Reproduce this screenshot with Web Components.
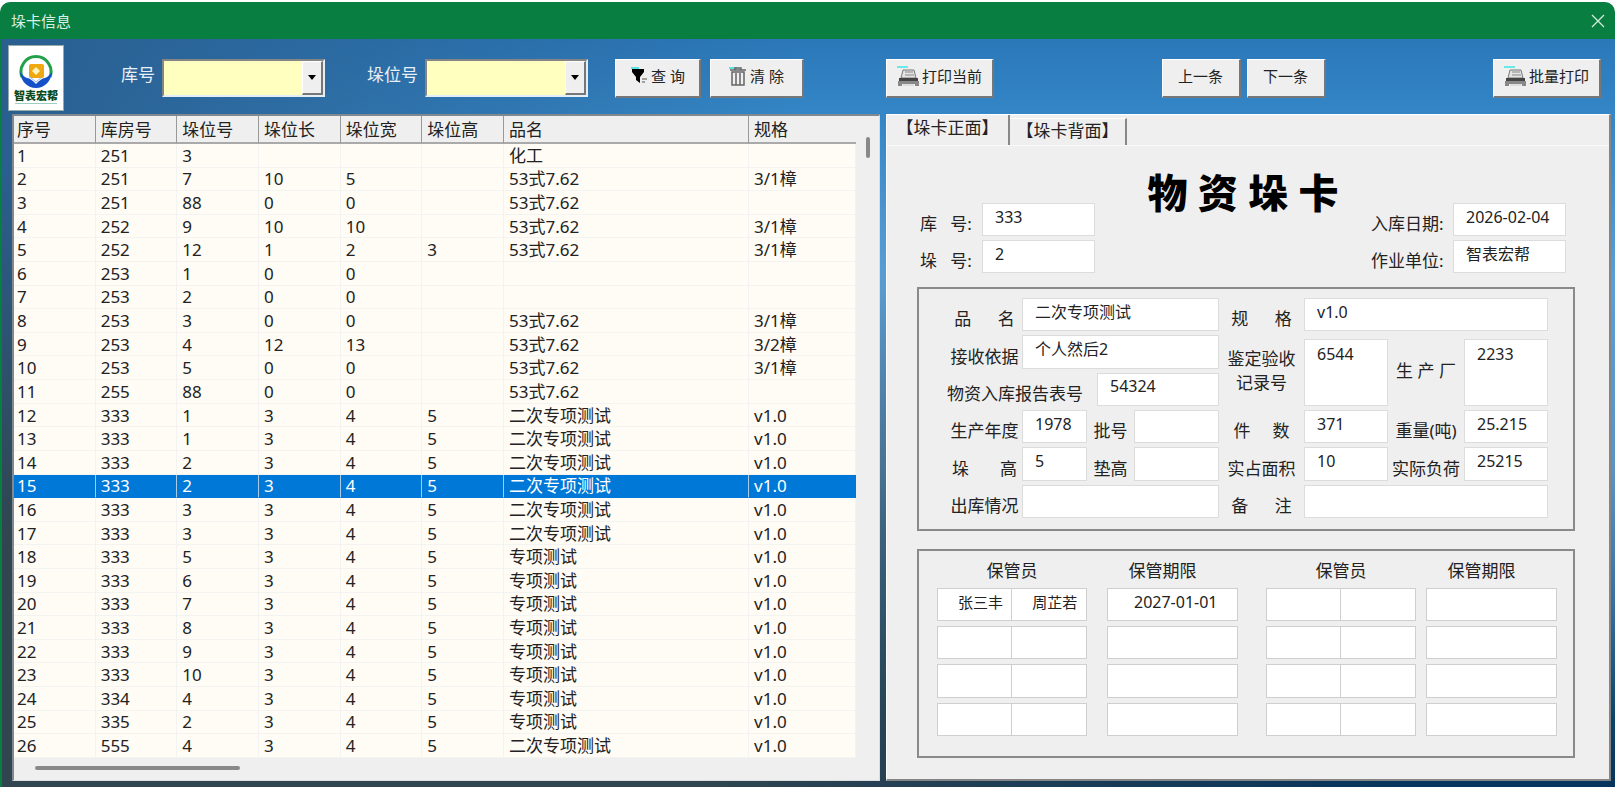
<!DOCTYPE html>
<html lang="zh-CN">
<head>
<meta charset="utf-8">
<title>垛卡信息</title>
<style>
  html, body {
    height: 100%;
    margin: 0;
  }
  body {
    background: #fff;
    color: #222;
    font-family: "Noto Sans", "Noto Sans CJK SC", sans-serif;
    font-size: 17px;
    line-height: 22px;
  }
</style>
</head>
<body>
<stack-window data-title="垛卡信息"></stack-window>

<script>
const makeTemplate = (html) => {
  const template = document.createElement("template");
  template.innerHTML = html;
  return template;
};

const icons = {
  none: "",
  filter: `<svg width="18" height="20" viewBox="0 0 18 20"><path d="M1 2h8" stroke="#5fe3e0" stroke-width="2"/><path d="M2 3h12v3l-4 5v6l-4-3v-3L2 6z" fill="#000"/><path d="M12 13h5M12 16h3" stroke="#555" stroke-width="1"/></svg>`,
  trash: `<svg width="18" height="20" viewBox="0 0 18 20"><path d="M0 2h8" stroke="#5fe3e0" stroke-width="2"/><path d="M1 4h16M6 4V2h6v2M3 6v13h12V6zM7 7v12M11 7v12" fill="none" stroke="#666" stroke-width="1.5"/></svg>`,
  printer: `<svg width="22" height="22" viewBox="0 0 22 22"><path d="M0 2h11" stroke="#6be8e8" stroke-width="2"/><path d="M6 5h11l2 8H4z" fill="#e4e4e4" stroke="#777"/><path d="M8 7h8M8 10h9" stroke="#888"/><path d="M2 13h19v3H2z" fill="#444"/><path d="M1 16h21v5h-4v-2H5v2H1z" fill="#888"/><path d="M6 19h11v2H6z" fill="#ddd"/></svg>`
};

/* raised toolbar button */
class ToolButton extends HTMLElement {
  constructor() {
    super();
    this.attachShadow({ mode: "open" });
    this.shadowRoot.innerHTML = `
<style>
  :host { display: block; }
  button {
    display: flex;
    align-items: center;
    justify-content: center;
    gap: 3px;
    box-sizing: border-box;
    width: 100%;
    height: 39px;
    padding: 0 0 3px;
    border: solid;
    border-width: 1px 2px 2px 1px;
    border-color: #fff #777 #777 #fff;
    background: #efefef;
    color: #222;
    font: inherit;
    font-size: 15px;
    white-space: pre;
  }
</style>
<button type="button">${icons[this.dataset.icon || "none"]}<span><slot></slot></span></button>`;
  }
}
customElements.define("tool-button", ToolButton);

/* label with a sunken drop-down */
class ComboBox extends HTMLElement {
  constructor() {
    super();
    this.attachShadow({ mode: "open" });
    this.shadowRoot.innerHTML = `
<style>
  :host { display: flex; align-items: center; gap: 7px; color: #e8f0f8; }
  label { padding-bottom: 6px; }
  .box {
    display: grid;
    grid-template-columns: 1fr 21px;
    box-sizing: border-box;
    width: 163px;
    height: 38px;
    border: 2px solid;
    border-color: #858585 #e4eef6 #e4eef6 #858585;
  }
  select {
    grid-area: 1 / 1 / 2 / 3;
    appearance: none;
    border: 0;
    border-radius: 0;
    padding: 0 24px 0 6px;
    background: #ffffc0;
    font: inherit;
  }
  .arrow {
    grid-area: 1 / 2;
    display: grid;
    place-items: center;
    border: solid;
    border-width: 1px 2px 2px 1px;
    border-color: #fff #777 #777 #fff;
    background: #efefef;
    pointer-events: none;
  }
</style>
<label for="pick"><slot></slot></label>
<div class="box">
  <select id="pick"><option></option></select>
  <span class="arrow"><svg width="8" height="5"><path d="M0 0h8L4 5z"/></svg></span>
</div>`;
  }
}
customElements.define("combo-box", ComboBox);

class CompanyLogo extends HTMLElement {
  constructor() {
    super();
    this.attachShadow({ mode: "open" });
    this.shadowRoot.innerHTML = `
<style>
  :host {
    display: flex;
    flex-direction: column;
    align-items: center;
    box-sizing: border-box;
    width: 56px;
    height: 66px;
    padding-top: 8px;
    border: 1px solid #9aa;
    background: #fff;
    color: #0b4a1c;
  }
  svg { flex: none; }
  b { font-size: 11px; line-height: 14px; font-weight: 900; }
  i { width: 42px; height: 1px; background: #9ccfc0; }
</style>
<svg width="34" height="35" viewBox="0 0 34 35">
  <path d="M3 23A15 15 0 1 1 31 23" fill="none" stroke="#22a04a" stroke-width="3"/>
  <path d="M1 18c2 2 4 5 7 6 3 0 6 3 9 6 3-3 6-6 9-6 3-1 5-4 7-6-1 10-8 16-16 16S2 28 1 18z" fill="#1450c8"/>
  <rect x="10" y="10" width="15" height="14" rx="2" fill="#f0a810"/>
  <path d="M17 13l4 4-4 4-4-4z" fill="#fff3c0"/>
  <path d="M11 23l6 5 6-5" fill="none" stroke="#8cb8f0" stroke-width="1"/>
</svg>
<b>智表宏帮</b><i></i>`;
  }
}
customElements.define("company-logo", CompanyLogo);

/* records shown in the list: 库房号, 垛位号, 长, 宽, 高, 品名, 规格 */
const T = "二次专项测试";
const Z = "专项测试";
const S = "53式7.62";
const records = [
  [251, 3, "", "", "", "化工", ""],
  [251, 7, 10, 5, "", S, "3/1樟"],
  [251, 88, 0, 0, "", S, ""],
  [252, 9, 10, 10, "", S, "3/1樟"],
  [252, 12, 1, 2, 3, S, "3/1樟"],
  [253, 1, 0, 0, "", "", ""],
  [253, 2, 0, 0, "", "", ""],
  [253, 3, 0, 0, "", S, "3/1樟"],
  [253, 4, 12, 13, "", S, "3/2樟"],
  [253, 5, 0, 0, "", S, "3/1樟"],
  [255, 88, 0, 0, "", S, ""],
  [333, 1, 3, 4, 5, T, "v1.0"],
  [333, 1, 3, 4, 5, T, "v1.0"],
  [333, 2, 3, 4, 5, T, "v1.0"],
  [333, 2, 3, 4, 5, T, "v1.0"],
  [333, 3, 3, 4, 5, T, "v1.0"],
  [333, 3, 3, 4, 5, T, "v1.0"],
  [333, 5, 3, 4, 5, Z, "v1.0"],
  [333, 6, 3, 4, 5, Z, "v1.0"],
  [333, 7, 3, 4, 5, Z, "v1.0"],
  [333, 8, 3, 4, 5, Z, "v1.0"],
  [333, 9, 3, 4, 5, Z, "v1.0"],
  [333, 10, 3, 4, 5, Z, "v1.0"],
  [334, 4, 3, 4, 5, Z, "v1.0"],
  [335, 2, 3, 4, 5, Z, "v1.0"],
  [555, 4, 3, 4, 5, T, "v1.0"]
];
const heads = ["序号", "库房号", "垛位号", "垛位长", "垛位宽", "垛位高", "品名", "规格"];

const listTemplate = makeTemplate(`
<style>
  :host {
    display: grid;
    grid-template: 1fr 22px / 1fr 23px;
    box-sizing: border-box;
    border: solid;
    border-width: 2px 1px 1px 2px;
    border-color: #808890 #ddd #ddd #808890;
    background: #efefef;
  }
  table {
    width: 100%;
    height: 100%;
    table-layout: fixed;
    border-collapse: separate;
    border-spacing: 0;
  }
  col { width: 9.7%; }
  col.name { width: 29.1%; }
  col.spec { width: auto; }
  th {
    height: 28px;
    box-sizing: border-box;
    padding: 2px 0 0 5px;
    border-right: 1px solid #999;
    border-bottom: 2px solid #aaa;
    background: #efefef;
    font-weight: normal;
    text-align: left;
  }
  th:last-child { border-right: 0; }
  td {
    padding: 1px 0 0 5px;
    border-right: 1px solid #f3f3f1;
    border-bottom: 1px solid #f3f3f1;
    background: #fffbf5;
    line-height: 20px;
    white-space: nowrap;
  }
  td:first-child, th:first-child { padding-left: 3px; }
  tr[aria-selected] td {
    background: #0078d7;
    border-bottom-color: #0078d7;
    border-right-color: #a8cdea;
    color: #fff;
  }
  tr[aria-selected] td:last-child { border-right-color: #0078d7; }
  .vbar { display: flex; justify-content: center; padding-top: 21px; }
  .vbar i { width: 4px; height: 21px; border-radius: 2px; background: #888; }
  .hbar { display: flex; align-items: center; padding: 0 21px 2px; }
  .hbar i { width: 205px; height: 4px; border-radius: 2px; background: #888; }
</style>
<table>
  <colgroup><col><col><col><col><col><col><col class="name"><col class="spec"></colgroup>
  <thead><tr></tr></thead>
  <tbody></tbody>
</table>
<div class="vbar"><i></i></div>
<div class="hbar"><i></i></div>
`);

class StackList extends HTMLElement {
  constructor() {
    super();
    this.attachShadow({ mode: "open" });
    this.shadowRoot.appendChild(listTemplate.content.cloneNode(true));
  }
  connectedCallback() {
    this.render();
  }
  render() {
    const selected = +this.dataset.selected;
    this.shadowRoot.querySelector("thead tr").innerHTML =
      heads.map((h) => `<th>${h}</th>`).join("");
    this.shadowRoot.querySelector("tbody").innerHTML = records
      .map((row, i) => {
        const cells = [i + 1, ...row].map((c) => `<td>${c}</td>`).join("");
        return `<tr${i + 1 === selected ? ' aria-selected="true"' : ""}>${cells}</tr>`;
      })
      .join("");
  }
}
customElements.define("stack-list", StackList);

/* one labelled value on the card; data-tall gives a two-row box */
class CardField extends HTMLElement {
  constructor() {
    super();
    this.attachShadow({ mode: "open" });
    const tall = this.hasAttribute("data-tall");
    const value = this.dataset.value || "";
    this.shadowRoot.innerHTML = `
<style>
  :host { display: flex; min-width: 0; align-items: flex-end; }
  :host([data-tall]) { align-items: center; }
  label {
    flex: none;
    width: var(--label, 75px);
    text-align: var(--label-align, center);
    line-height: 24px;
    white-space: pre;
  }
  input, textarea {
    flex: 1;
    align-self: stretch;
    box-sizing: border-box;
    width: 0;
    min-width: 0;
    min-height: 33px;
    margin: 0;
    border: 1px solid #dcdcdc;
    border-radius: 0;
    padding: 0 4px 6px 12px;
    background: #fff;
    color: #222;
    font: inherit;
    font-size: 16px;
    resize: none;
  }
  textarea { margin-top: 4px; padding-top: 3px; overflow: hidden; }
</style>
<label for="value"><slot></slot></label>
${tall ? `<textarea id="value">${value}</textarea>` : `<input id="value" value="${value}">`}`;
  }
}
customElements.define("card-field", CardField);

/* keeper grid in the lower half of the card */
class KeeperGrid extends HTMLElement {
  constructor() {
    super();
    this.attachShadow({ mode: "open" });
    const first = ["张三丰", "周芷若", "2027-01-01"];
    const half = (vals, n) => `
      <div class="pair">
        <input aria-label="保管员" value="${vals[0] || ""}"><input aria-label="保管员" value="${vals[1] || ""}">
      </div>
      <span></span>
      <input class="date" aria-label="保管期限" value="${vals[2] || ""}">${n ? "" : "<span></span>"}`;
    const rows = [0, 1, 2, 3]
      .map((r) => half(r ? [] : first, 0) + half([], 1))
      .join("");
    this.shadowRoot.innerHTML = `
<style>
  :host {
    display: grid;
    grid-template-columns: 150fr 20px 131fr 28px 150fr 10px 131fr;
    grid-template-rows: 32px repeat(4, 1fr);
    row-gap: 5px;
    box-sizing: border-box;
    padding: 0 16px 20px 18px;
    border: 2px solid #8a8a8a;
  }
  b { align-self: end; font-weight: normal; text-align: center; line-height: 24px; }
  b.term { padding-right: 20px; }
  .pair { display: flex; }
  input {
    box-sizing: border-box;
    width: 100%;
    min-width: 0;
    min-height: 0;
    margin: 0;
    border: 1px solid #cfcfcf;
    border-radius: 0;
    padding: 0 0 6px 20px;
    background: #fff;
    color: #222;
    font: inherit;
    font-size: 15px;
  }
  .pair input + input { border-left: 0; }
  .date { padding-left: 26px; font-size: 16px; }
</style>
<b>保管员</b><span></span><b class="term">保管期限</b><span></span><b>保管员</b><span></span><b class="term">保管期限</b>
${rows}`;
  }
}
customElements.define("keeper-grid", KeeperGrid);

const cardTemplate = makeTemplate(`
<style>
  :host {
    display: flex;
    flex-direction: column;
    box-sizing: border-box;
    border: solid;
    border-width: 1px 2px 2px 1px;
    border-color: #fff #858585 #858585 #fff;
    background: #efefef;
  }
  .tabs { display: flex; height: 30px; border-bottom: 1px solid #fafafa; }
  .tabs button {
    border: 0;
    border-right: 2px solid #888;
    background: none;
    color: #222;
    font: inherit;
    white-space: nowrap;
  }
  .tabs .on { width: 123px; padding: 0 6px 4px; }
  .tabs .off { width: 117px; margin-top: 3px; padding: 0 4px 2px; border-top: 1px solid #fff; }
  .body {
    flex: 1;
    display: flex;
    flex-direction: column;
    padding: 21px 34px 21px 30px;
  }
  header {
    display: grid;
    grid-template-columns: 1fr auto 1fr;
    padding: 0 9px 14px 3px;
  }
  h1 { margin: 0; color: #000; font-size: 40px; font-weight: 800; line-height: 52px; white-space: nowrap; }
  .col { display: flex; flex-direction: column; gap: 4px; width: 175px; padding-top: 36px; --label: 62px; --label-align: start; }
  .col.right { width: 195px; justify-self: end; --label: 82px; }
  .goods {
    flex: 246;
    display: grid;
    grid-template-columns: 140fr 132fr 169fr 160fr;
    grid-template-rows: repeat(6, 1fr);
    row-gap: 4px;
    box-sizing: border-box;
    padding: 9px 25px 11px 28px;
    border: 2px solid #8a8a8a;
  }
  .two { grid-column: span 2; }
  .c { --label: 85px; }
  .d { --label: 76px; }
  .b { --label: 47px; }
  .long { --label: 150px; --label-align: start; }
  [data-tall] { grid-row: span 2; }
  keeper-grid { flex: 207; margin-top: 18px; }
</style>
<div class="tabs">
  <button class="on" type="button">【垛卡正面】</button>
  <button class="off" type="button">【垛卡背面】</button>
</div>
<div class="body">
  <header>
    <div class="col">
      <card-field data-value="333">库   号:</card-field>
      <card-field data-value="2">垛   号:</card-field>
    </div>
    <h1>物 资 垛 卡</h1>
    <div class="col right">
      <card-field data-value="2026-02-04">入库日期:</card-field>
      <card-field data-value="智表宏帮">作业单位:</card-field>
    </div>
  </header>
  <section class="goods">
    <card-field class="two" data-value="二次专项测试">品      名</card-field>
    <card-field class="two c" data-value="v1.0">规      格</card-field>
    <card-field class="two" data-value="个人然后2">接收依据</card-field>
    <card-field class="c" data-tall data-value="6544">鉴定验收<br>记录号</card-field>
    <card-field class="d" data-tall data-value="2233">生 产 厂</card-field>
    <card-field class="two long" data-value="54324">物资入库报告表号</card-field>
    <card-field data-value="1978">生产年度</card-field>
    <card-field class="b">批号</card-field>
    <card-field class="c" data-value="371">件     数</card-field>
    <card-field class="d" data-value="25.215">重量(吨)</card-field>
    <card-field data-value="5">垛       高</card-field>
    <card-field class="b">垫高</card-field>
    <card-field class="c" data-value="10">实占面积</card-field>
    <card-field class="d" data-value="25215">实际负荷</card-field>
    <card-field class="two">出库情况</card-field>
    <card-field class="two c">备      注</card-field>
  </section>
  <keeper-grid></keeper-grid>
</div>
`);

class StackCard extends HTMLElement {
  constructor() {
    super();
    this.attachShadow({ mode: "open" });
    this.shadowRoot.appendChild(cardTemplate.content.cloneNode(true));
  }
}
customElements.define("stack-card", StackCard);

const windowTemplate = makeTemplate(`
<style>
  :host {
    display: flex;
    flex-direction: column;
    box-sizing: border-box;
    min-height: 100vh;
    padding-top: 2px;
  }
  .title {
    display: flex;
    align-items: center;
    justify-content: space-between;
    height: 37px;
    padding: 0 9px 0 11px;
    border-radius: 10px 10px 0 0;
    background: #087e40;
    color: #dcefe4;
    font-size: 15px;
  }
  .title button { display: flex; padding: 0; border: 0; background: none; }
  .client {
    flex: 1;
    display: flex;
    flex-direction: column;
    border-left: 2px solid #087e40;
    background:
      radial-gradient(ellipse at 12% 100%, #30454f 25%, #30454f00 60%),
      linear-gradient(90deg, #2a5f90, #2a5f9000 50%),
      linear-gradient(180deg, #2b78b9, #3486c6 10%, #5b9fd6 33%, #5b92c2 58%, #3a709f 75%, #0d4268 91%, #06345c);
  }
  .tools {
    display: grid;
    grid-template-columns: 872fr 725fr;
    column-gap: 6px;
    padding: 6px 4px 3px 6px;
  }
  .tools > div { display: flex; align-items: center; height: 66px; }
  .find combo-box:first-of-type { margin-left: 57px; }
  .find combo-box + combo-box { margin-left: 42px; }
  .find tool-button { width: 86px; margin-left: 27px; }
  .find tool-button + tool-button { width: 94px; margin-left: 9px; }
  .nav { justify-content: space-between; padding-right: 10px; }
  .nav .step { display: flex; gap: 6px; }
  .nav tool-button { width: 108px; }
  .nav .step tool-button { width: 79px; }
  main {
    flex: 1;
    display: grid;
    grid-template-columns: 868fr 725fr;
    column-gap: 6px;
    padding: 0 4px 6px 10px;
  }
</style>
<div class="title">
  <span></span>
  <button type="button" aria-label="关闭"><svg width="16" height="16"><path d="M2 2l12 12M14 2L2 14" stroke="#d4ecdc" stroke-width="1.3"/></svg></button>
</div>
<div class="client">
  <div class="tools">
    <div class="find">
      <company-logo></company-logo>
      <combo-box>库号</combo-box>
      <combo-box>垛位号</combo-box>
      <tool-button data-icon="filter">查 询</tool-button>
      <tool-button data-icon="trash">清 除</tool-button>
    </div>
    <div class="nav">
      <tool-button data-icon="printer">打印当前</tool-button>
      <div class="step">
        <tool-button>上一条</tool-button>
        <tool-button>下一条</tool-button>
      </div>
      <tool-button data-icon="printer">批量打印</tool-button>
    </div>
  </div>
  <main>
    <stack-list data-selected="15"></stack-list>
    <stack-card></stack-card>
  </main>
</div>
`);

class StackWindow extends HTMLElement {
  constructor() {
    super();
    this.attachShadow({ mode: "open" });
    this.shadowRoot.appendChild(windowTemplate.content.cloneNode(true));
    this.shadowRoot.querySelector(".title span").textContent = this.dataset.title;
  }
}
customElements.define("stack-window", StackWindow);
</script>
</body>
</html>
